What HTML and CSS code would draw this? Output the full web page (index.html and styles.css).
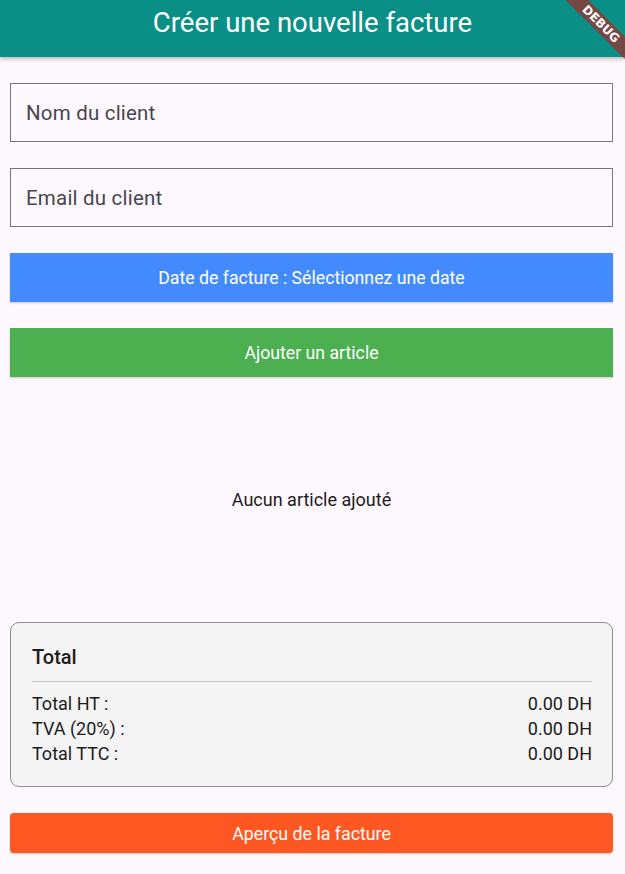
FILE: index.html
```html
<!DOCTYPE html>
<html lang="fr">
<head>
<meta charset="utf-8">
<title>Créer une nouvelle facture</title>
<link rel="stylesheet" href="styles.css">
</head>
<body>
<div class="app">
  <header class="appbar">
    <h1 class="title">Créer une nouvelle facture</h1>
  </header>
  <main class="content">
    <div class="field"><span class="label">Nom du client</span></div>
    <div class="field"><span class="label">Email du client</span></div>
    <button class="btn btn-blue">Date de facture : Sélectionnez une date</button>
    <button class="btn btn-green">Ajouter un article</button>
    <div class="empty">Aucun article ajouté</div>
    <section class="card">
      <div class="card-title">Total</div>
      <div class="divider"></div>
      <div class="row"><span>Total HT :</span><span>0.00 DH</span></div>
      <div class="row"><span>TVA (20%) :</span><span>0.00 DH</span></div>
      <div class="row"><span>Total TTC :</span><span>0.00 DH</span></div>
    </section>
    <button class="btn btn-orange">Aperçu de la facture</button>
  </main>
  <div class="debug-wrap"><div class="debug">DEBUG</div></div>
</div>
</body>
</html>
```
FILE: styles.css
```css
* { box-sizing: border-box; }
html, body { margin: 0; padding: 0; }
body {
  background: #fdf7fe;
  font-family: Roboto, "Noto Sans", sans-serif;
  width: 625px;
  height: 874px;
  overflow: hidden;
}
.app { position: relative; width: 625px; height: 874px; overflow: hidden; }
.appbar {
  height: 57px;
  background: #0a8f87;
  display: flex;
  align-items: center;
  justify-content: center;
  box-shadow: 0 2px 4px rgba(0,0,0,0.25);
  position: relative;
  z-index: 1;
}
.title {
  margin: 0;
  color: #fff;
  font-weight: 400;
  font-size: 27.5px;
  line-height: 1;
  padding-bottom: 12px;
}
.content {
  padding: 26px 12px 0 10px;
  display: flex;
  flex-direction: column;
}
.field {
  height: 59px;
  border: 1px solid #79747e;
  border-radius: 0;
  display: flex;
  align-items: center;
  padding-left: 15px;
  margin-bottom: 26px;
}
.label { color: #49454f; font-size: 20.5px; letter-spacing: 0.2px; }
.btn {
  border: none;
  width: 100%;
  color: #fff;
  font-family: Roboto, "Noto Sans", sans-serif;
  font-size: 17.7px;
  display: flex;
  align-items: center;
  justify-content: center;
  padding: 0;
  box-shadow: 0 1px 2px rgba(0,0,0,0.2);
}
.btn-blue { background: #448aff; height: 49px; margin-bottom: 26px; }
.btn-green { background: #4caf50; height: 49px; }
.empty {
  height: 245px;
  display: flex;
  align-items: center;
  justify-content: center;
  color: #1d1b20;
  font-size: 18px;
}
.card {
  background: #f4f4f4;
  border: 1px solid #8e8e90;
  border-radius: 9px;
  padding: 20px 20px 20px 21px;
  margin-bottom: 26px;
  height: 165px;
}
.card-title { font-size: 20px; font-weight: 500; color: #1d1b20; line-height: 28px; }
.divider { height: 1px; background: #cac4d0; margin: 10px 0 9px; }
.row {
  display: flex;
  justify-content: space-between;
  font-size: 18px;
  line-height: 25px;
  color: #1d1b20;
}
.btn-orange { background: #ff5722; height: 40px; border-radius: 4px; font-size: 17.8px; }
.debug-wrap {
  position: absolute;
  top: 0;
  right: 0;
  width: 80px;
  height: 80px;
  overflow: hidden;
  z-index: 2;
  pointer-events: none;
}
.debug {
  position: absolute;
  width: 120px;
  height: 16px;
  top: 16px;
  left: -4px;
  transform: rotate(45deg);
  background: rgba(183, 28, 28, 0.63);
  color: #fff;
  font-family: "DejaVu Sans", sans-serif;
  font-weight: 700;
  font-size: 12px;
  line-height: 16px;
  text-align: center;
}
```
